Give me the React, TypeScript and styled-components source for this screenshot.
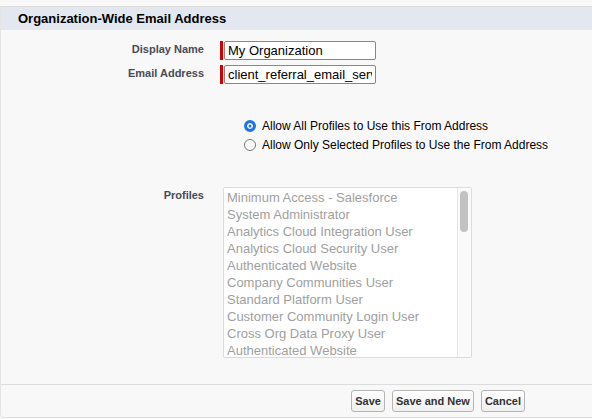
import styled, { createGlobalStyle } from 'styled-components';

const GlobalStyle = createGlobalStyle`
html, body {
  margin: 0;
  padding: 0;
  background: #f8f8f8;
  font-family: Arial, "Liberation Sans", Helvetica, sans-serif;
}
`;

const Panel = styled.div`
width: 592px;
height: 418px;
box-sizing: border-box;
padding-top: 6px;
display: flex;
flex-direction: column;
`;

const Section = styled.div`
flex: 1;
display: flex;
flex-direction: column;
border-top: 1px solid #dddbda;
border-left: 1px solid #e4e4e4;
border-bottom: 1px solid #e0e0e0;
border-radius: 0 0 0 4px;
`;

const Header = styled.h3`
margin: 0;
height: 23px;
line-height: 23px;
padding-left: 17px;
background: #e3e7ef;
font-size: 13px;
font-weight: bold;
color: #000;
`;

const FormBody = styled.div`
flex: 1;
padding-top: 11px;
`;

const Row = styled.div<{ top?: number }>`
display: flex;
align-items: flex-start;
margin-top: ${(p) => p.top ?? 0}px;
`;

const Label = styled.label`
width: 203px;
text-align: right;
font-size: 11px;
font-weight: bold;
color: #4a4a56;
padding-top: 2px;
flex-shrink: 0;
`;

const Field = styled.div`
margin-left: 16px;
display: flex;
align-items: stretch;
`;

const Required = styled.span`
width: 3px;
background: #c00;
margin-right: 1px;
`;

const TextInput = styled.input`
width: 152px;
height: 19px;
box-sizing: border-box;
border: 1px solid #888;
border-radius: 2px;
padding: 0 3px;
font-family: Arial, "Liberation Sans", sans-serif;
font-size: 13px;
color: #000;
background: #fff;
`;

const RadioGroup = styled.div`
margin-left: 243px;
margin-top: 35px;
display: flex;
flex-direction: column;
gap: 6px;
`;

const RadioLine = styled.label`
display: flex;
align-items: center;
font-size: 12px;
color: #000;
height: 13px;
`;

const Radio = styled.span<{ checked?: boolean }>`
width: 12px;
height: 12px;
border-radius: 50%;
box-sizing: border-box;
border: ${(p) => (p.checked ? '3px solid #1a73e8' : '1px solid #767676')};
background: ${(p) => (p.checked ? '#1a73e8' : '#fff')};
box-shadow: ${(p) => (p.checked ? 'inset 0 0 0 1.5px #fff' : 'none')};
margin-right: 6px;
flex-shrink: 0;
`;

const ListBox = styled.div`
margin-left: 19px;
width: 249px;
height: 171px;
box-sizing: border-box;
border: 1px solid #dcdcdc;
border-radius: 2px;
background: #fff;
display: flex;
overflow: hidden;
`;

const Options = styled.ul`
list-style: none;
margin: 0;
padding: 1px 0 0 3px;
flex: 1;
`;

const Option = styled.li`
font-size: 13px;
line-height: 17px;
color: #a0a0a0;
white-space: nowrap;
`;

const ScrollTrack = styled.div`
width: 14px;
border-left: 1px solid #e6e6e6;
background: #fafafa;
padding: 3px 0 0 2px;
box-sizing: border-box;
`;

const ScrollThumb = styled.div`
width: 8px;
height: 41px;
border-radius: 4px;
background: #c2c2c2;
`;

const Footer = styled.div`
border-top: 1px solid #dcdcdc;
height: 32px;
display: flex;
justify-content: flex-end;
align-items: center;
gap: 7px;
padding-right: 67px;
`;

const Button = styled.button`
height: 22px;
padding: 0 3px;
border: 1px solid #b5b5b5;
border-radius: 3px;
background: linear-gradient(#ffffff, #f0f0f0);
font-family: Arial, "Liberation Sans", sans-serif;
font-size: 11px;
font-weight: bold;
color: #333;
`;

const profiles = [
  'Minimum Access - Salesforce',
  'System Administrator',
  'Analytics Cloud Integration User',
  'Analytics Cloud Security User',
  'Authenticated Website',
  'Company Communities User',
  'Standard Platform User',
  'Customer Community Login User',
  'Cross Org Data Proxy User',
  'Authenticated Website',
];

export default function App() {
  return (
    <>
      <GlobalStyle />
      <Panel>
        <Section>
          <Header>Organization-Wide Email Address</Header>
          <FormBody>
            <Row>
              <Label>Display Name</Label>
              <Field>
                <Required />
                <TextInput defaultValue="My Organization" />
              </Field>
            </Row>
            <Row top={5}>
              <Label>Email Address</Label>
              <Field>
                <Required />
                <TextInput defaultValue="client_referral_email_service@example.com" />
              </Field>
            </Row>
            <RadioGroup>
              <RadioLine>
                <Radio checked />
                Allow All Profiles to Use this From Address
              </RadioLine>
              <RadioLine>
                <Radio />
                Allow Only Selected Profiles to Use the From Address
              </RadioLine>
            </RadioGroup>
            <Row top={36}>
              <Label>Profiles</Label>
              <ListBox>
                <Options>
                  {profiles.map((p, i) => (
                    <Option key={i}>{p}</Option>
                  ))}
                </Options>
                <ScrollTrack>
                  <ScrollThumb />
                </ScrollTrack>
              </ListBox>
            </Row>
          </FormBody>
          <Footer>
            <Button>Save</Button>
            <Button>Save and New</Button>
            <Button>Cancel</Button>
          </Footer>
        </Section>
      </Panel>
    </>
  );
}
